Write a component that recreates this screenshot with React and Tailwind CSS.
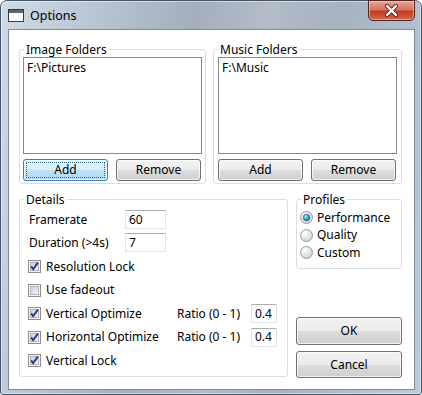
import React from 'react';

const FONT = { fontFamily: '"Noto Sans", "Liberation Sans", sans-serif' };

const Button = ({ children, className = '', focused = false }) => (
  <button
    className={`relative flex items-center justify-center rounded-[3px] border text-[12px] leading-none text-black ${
      focused
        ? 'border-[#3c7fb1] bg-[linear-gradient(to_bottom,#e5f4fc_0%,#d7eefa_50%,#bfe2f6_50%,#b1d8ef_100%)]'
        : 'border-[#707070] bg-[linear-gradient(to_bottom,#f2f2f2_0%,#ebebeb_50%,#dddddd_50%,#cfcfcf_100%)]'
    } shadow-[inset_0_0_0_1px_rgba(255,255,255,0.7)] ${className}`}
  >
    {focused && (
      <span className="absolute inset-[2px] rounded-[1px] border border-dotted border-[#1c6b8f]"></span>
    )}
    <span className="relative">{children}</span>
  </button>
);

const TextBox = ({ value, className = '' }) => (
  <div
    className={`flex h-[19px] items-center border border-[#e2e3ea] border-t-[#abadb3] bg-white pl-[3px] text-[12px] text-black ${className}`}
  >
    {value}
  </div>
);

const CheckBox = ({ checked, label }) => (
  <div className="flex h-[23.5px] items-center gap-[5px]">
    <svg width="13" height="13" viewBox="0 0 13 13" className="shrink-0">
      <defs>
        <linearGradient id="cbg" x1="0" y1="0" x2="1" y2="1">
          <stop offset="0" stopColor="#cbcfd5" />
          <stop offset="1" stopColor="#f6f6f6" />
        </linearGradient>
      </defs>
      <rect x="0.5" y="0.5" width="12" height="12" fill="#f4f4f4" stroke="#8e8f8f" />
      <rect x="2.5" y="2.5" width="8" height="8" fill="url(#cbg)" stroke="#aeb3b9" />
      {checked && (
        <path d="M3.2 6.4 L5.2 9.2 L9.8 2.6" fill="none" stroke="#313286" strokeWidth="1.9" />
      )}
    </svg>
    <span className="text-[12px] text-black">{label}</span>
  </div>
);

const Radio = ({ checked, label }) => (
  <div className="flex h-[17.5px] items-center gap-[4px]">
    <svg width="13" height="13" viewBox="0 0 13 13" className="shrink-0">
      <defs>
        <radialGradient id="rbg" cx="0.35" cy="0.3" r="0.8">
          <stop offset="0" stopColor="#ffffff" />
          <stop offset="1" stopColor="#c9cdd2" />
        </radialGradient>
        <radialGradient id="rdot" cx="0.4" cy="0.35" r="0.7">
          <stop offset="0" stopColor="#a8e4ff" />
          <stop offset="0.6" stopColor="#2c9ed6" />
          <stop offset="1" stopColor="#0c4f7a" />
        </radialGradient>
      </defs>
      <circle cx="6.5" cy="6.5" r="6" fill="url(#rbg)" stroke="#9a9a9a" />
      {checked && <circle cx="6.5" cy="6.5" r="3.3" fill="url(#rdot)" stroke="#23597e" strokeWidth="0.6" />}
    </svg>
    <span className="text-[12px] text-black">{label}</span>
  </div>
);

// group box: legend sits on the border, content padding lives on the inner div
const Group = ({ title, className = '', bodyClass = '', children }) => (
  <fieldset className={`rounded-[3px] border border-[#d5dfe5] ${className}`}>
    <legend className="ml-[4px] px-[2px] text-[12px] leading-[15px] text-black">{title}</legend>
    <div className={bodyClass}>{children}</div>
  </fieldset>
);

const FolderGroup = ({ title, path, focusedAdd, className = '', bodyClass = '' }) => (
  <Group title={title} className={className} bodyClass={`pb-[2px] ${bodyClass}`}>
    <div className="h-[97px] border border-[#828790] bg-white px-[3px] pt-[1px] text-[12px] leading-[17px] text-black">
      {path}
    </div>
    <div className="mt-[5px] flex gap-[8px]">
      <Button focused={focusedAdd} className="h-[22px] w-[85px]">Add</Button>
      <Button className="h-[22px] w-[85px]">Remove</Button>
    </div>
  </Group>
);

const App = () => {
  return (
    <div style={FONT} className="h-[395px] w-[422px] bg-white">
      <div className="flex h-[395px] w-[422px] flex-col rounded-t-[7px] rounded-b-[3px] border border-[#46566a] bg-[linear-gradient(100deg,#cfdbe7_0%,#b7c4d2_20%,#a4afbc_40%,#b3bcc7_55%,#a6b2c0_70%,#bccbdb_100%)] shadow-[inset_0_0_0_1px_rgba(255,255,255,0.45)]">
        {/* title bar */}
        <div className="flex h-[28px] items-start">
          <div className="ml-[7px] mt-[8px] h-[13px] w-[16px] border border-[#3a3a3a] bg-white">
            <div className="h-[3px] bg-[#5a6674]"></div>
          </div>
          <div className="ml-[6px] mt-[6px] text-[12.5px] leading-[18px] text-black">Options</div>
          <div className="ml-auto mr-[6px] mt-[-1px] flex h-[21px] w-[47px] items-center justify-center rounded-b-[5px] border border-[#4f2620] bg-[linear-gradient(to_bottom,#eaa59a_0%,#d8735f_45%,#c43a22_55%,#d9654a_100%)] shadow-[inset_0_0_0_1px_rgba(255,220,210,0.5)]">
            <svg width="15" height="13" viewBox="0 0 15 13">
              <path d="M3 2 L12 11 M12 2 L3 11" stroke="#5b2a22" strokeWidth="4.2" strokeLinecap="round" />
              <path d="M3 2 L12 11 M12 2 L3 11" stroke="#ffffff" strokeWidth="2.4" strokeLinecap="round" />
            </svg>
          </div>
        </div>

        {/* client area */}
        <div className="ml-[7px] h-[361px] w-[407px] border border-[#7d8b9b] bg-white">
          <div className="flex gap-[7px] pl-[10px] pt-[12px]">
            <FolderGroup title="Image Folders" path="F:\Pictures" focusedAdd className="w-[187px]" bodyClass="px-[3px]" />
            <FolderGroup title="Music Folders" path="F:\Music" className="w-[189px]" bodyClass="px-[4px]" />
          </div>

          <div className="mt-[8px] flex gap-[8px] pl-[10px]">
            <Group title="Details" className="h-[185px] w-[269px]" bodyClass="pl-[8px]">
              <div className="flex h-[22px] items-end">
                <span className="w-[97px] pl-px text-[12px] leading-[19px] text-black">Framerate</span>
                <TextBox value="60" className="w-[41px]" />
              </div>
              <div className="mt-[4px] flex items-center">
                <span className="w-[97px] pl-px text-[12px] leading-[19px] text-black">Duration (&gt;4s)</span>
                <TextBox value="7" className="w-[41px]" />
              </div>
              <div className="mt-[3px]">
                <CheckBox checked label="Resolution Lock" />
                <CheckBox label="Use fadeout" />
                <div className="flex items-center">
                  <div className="w-[149px]">
                    <CheckBox checked label="Vertical Optimize" />
                  </div>
                  <span className="w-[74px] text-[12px] text-black">Ratio (0 - 1)</span>
                  <TextBox value="0.4" className="w-[26px]" />
                </div>
                <div className="flex items-center">
                  <div className="w-[149px]">
                    <CheckBox checked label="Horizontal Optimize" />
                  </div>
                  <span className="w-[74px] text-[12px] text-black">Ratio (0 - 1)</span>
                  <TextBox value="0.4" className="w-[26px]" />
                </div>
                <CheckBox checked label="Vertical Lock" />
              </div>
            </Group>

            <div className="flex h-[186px] w-[106px] flex-col">
              <Group title="Profiles" className="h-[77px]" bodyClass="pl-[3px] pt-[2px]">
                <Radio checked label="Performance" />
                <Radio label="Quality" />
                <Radio label="Custom" />
              </Group>
              <div className="mt-auto flex flex-col gap-[6px]">
                <Button className="h-[28px] w-[106px]">OK</Button>
                <Button className="h-[27px] w-[106px]">Cancel</Button>
              </div>
            </div>
          </div>
        </div>
      </div>
    </div>
  );
};

export default App;
